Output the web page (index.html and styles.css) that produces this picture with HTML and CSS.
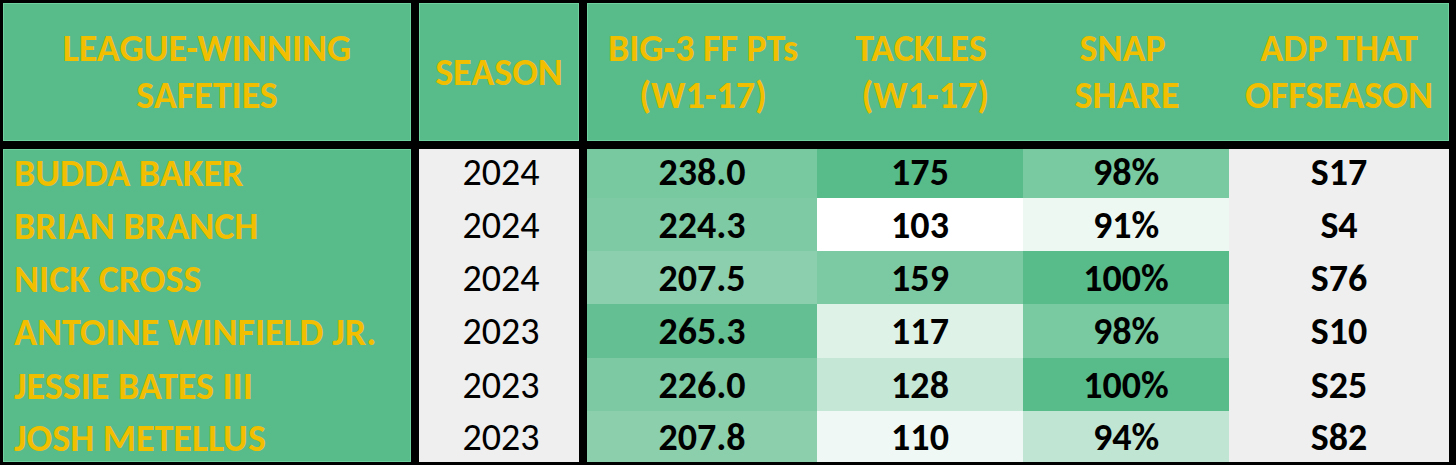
FILE: index.html
```html
<!DOCTYPE html>
<html>
<head>
<meta charset="utf-8">
<link rel="stylesheet" href="styles.css">
</head>
<body>
<div class="sheet">
  <div class="hcell h-name">LEAGUE-WINNING<br>SAFETIES</div>
  <div class="hcell h-season">SEASON</div>
  <div class="hcell h-stats">
    <div class="hlabel">BIG-3 FF PTs<br>(W1-17)</div>
    <div class="hlabel">TACKLES<br>&nbsp;(W1-17)</div>
    <div class="hlabel">SNAP&nbsp;<br>SHARE</div>
    <div class="hlabel">ADP THAT<br>OFFSEASON</div>
  </div>

  <div class="names">
    <div class="name first">BUDDA BAKER</div>
    <div class="name">BRIAN BRANCH</div>
    <div class="name">NICK CROSS</div>
    <div class="name">ANTOINE WINFIELD JR.</div>
    <div class="name">JESSIE BATES III</div>
    <div class="name">JOSH METELLUS</div>
  </div>

  <div class="seasons">
    <div class="season first">2024</div>
    <div class="season">2024</div>
    <div class="season">2024</div>
    <div class="season">2023</div>
    <div class="season">2023</div>
    <div class="season">2023</div>
  </div>

  <div class="stats">
    <div class="val first" style="background:#78c8a0">238.0</div>
    <div class="val first" style="background:#57bb8a">175</div>
    <div class="val first" style="background:#79c9a1">98%</div>
    <div class="val first adp">S17</div>

    <div class="val" style="background:#7dcaa4">224.3</div>
    <div class="val" style="background:#ffffff">103</div>
    <div class="val" style="background:#eef8f3">91%</div>
    <div class="val adp">S4</div>

    <div class="val" style="background:#8ccfae">207.5</div>
    <div class="val" style="background:#7ccaa4">159</div>
    <div class="val" style="background:#57bb8a">100%</div>
    <div class="val adp">S76</div>

    <div class="val" style="background:#64bf92">265.3</div>
    <div class="val" style="background:#def2e8">117</div>
    <div class="val" style="background:#79c9a1">98%</div>
    <div class="val adp">S10</div>

    <div class="val" style="background:#7cc9a3">226.0</div>
    <div class="val" style="background:#c5e7d6">128</div>
    <div class="val" style="background:#57bb8a">100%</div>
    <div class="val adp">S25</div>

    <div class="val" style="background:#8bcfad">207.8</div>
    <div class="val" style="background:#eff8f4">110</div>
    <div class="val" style="background:#c1e5d3">94%</div>
    <div class="val adp">S82</div>
  </div>
</div>
</body>
</html>
```

FILE: styles.css
```css
html, body {
  margin: 0;
  padding: 0;
  background: #000;
}

body {
  font-family: Carlito, "Liberation Sans Narrow", "Open Sans", sans-serif;
  font-size: 38px;
}

.sheet {
  width: 1456px;
  height: 465px;
  box-sizing: border-box;
  background: #000;
  display: grid;
  grid-template-columns: 408px 160px 862px;
  grid-template-rows: 138px 313px;
  column-gap: 8px;
  row-gap: 8px;
  padding: 3px 7px 3px 3px;
}

.hcell {
  background: #57bb8a;
  border: 1px solid #6fd0a0;
  box-sizing: border-box;
  color: #f1be00;
  font-weight: bold;
  line-height: 47px;
  text-align: center;
  display: flex;
  align-items: center;
  justify-content: center;
}

.h-stats {
  display: grid;
  grid-template-columns: 230px 206px 206px 1fr;
  align-items: center;
}

.hlabel {
  text-align: center;
  white-space: nowrap;
}

.names, .seasons {
  display: grid;
  grid-template-rows: 49px 53px 53px 54px 53px 51px;
}

.names {
  background: #57bb8a;
  border: 1px solid #6fd0a0;
  box-sizing: border-box;
}

.name {
  color: #f1be00;
  font-weight: bold;
  padding-left: 10px;
  display: flex;
  align-items: center;
  white-space: nowrap;
}

.seasons {
  background: #efefef;
}

.season {
  color: #000;
  display: flex;
  align-items: center;
  justify-content: center;
  padding-left: 4px;
}

.stats {
  display: grid;
  grid-template-columns: 230px 206px 206px 1fr;
  grid-template-rows: 49px 53px 53px 54px 53px 51px;
}

.val {
  color: #000;
  font-weight: bold;
  display: flex;
  align-items: center;
  justify-content: center;
}

.first {
  padding-bottom: 3px;
}

.adp {
  background: #efefef;
}
```
